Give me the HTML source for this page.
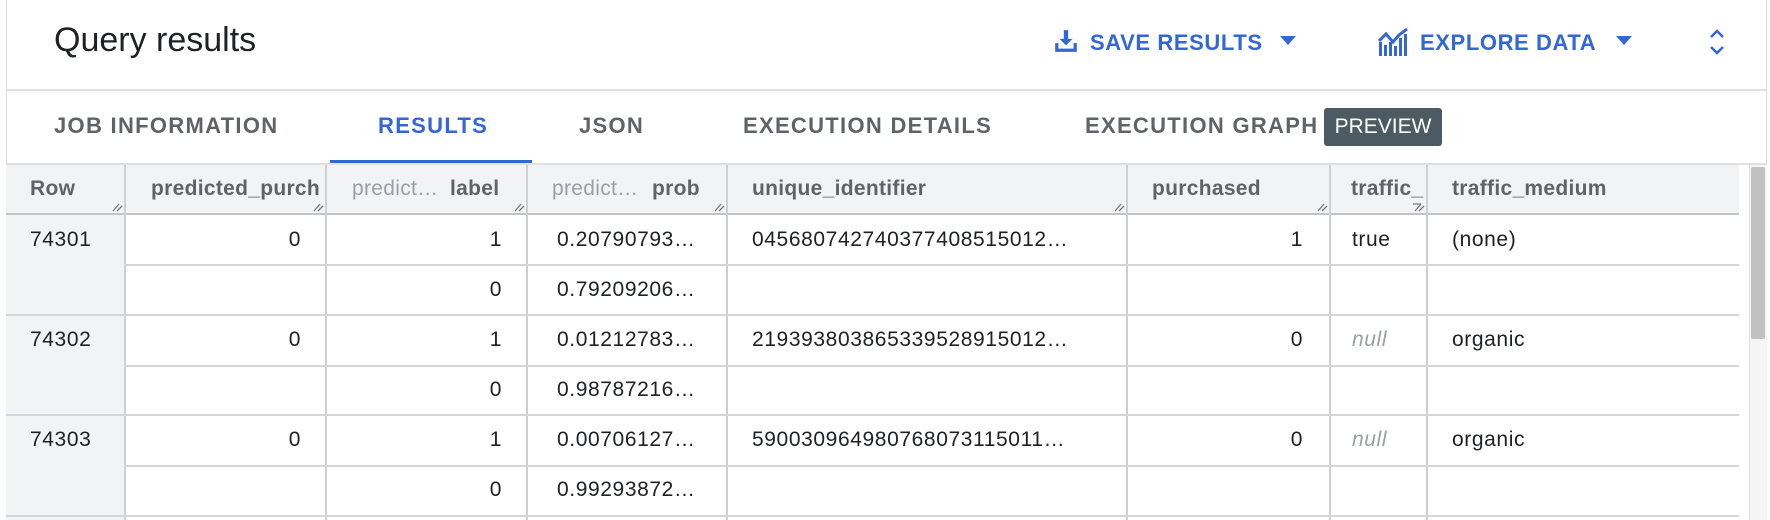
<!DOCTYPE html>
<html><head><meta charset="utf-8"><style>
*{margin:0;padding:0;box-sizing:border-box}
body{width:1770px;height:520px;overflow:hidden;background:#fff;font-family:"Liberation Sans",sans-serif;position:relative;color:#202124}
.a{position:absolute;white-space:nowrap}
.lb{left:6px;top:0;width:1px;height:520px;background:#dadce0}
.rb{left:1766px;top:0;width:1px;height:520px;background:#dadce0}
.title{left:54px;top:21px;font-size:34px;color:#202124}
.btn{color:#3367d6;font-size:22px;font-weight:bold;top:30px;letter-spacing:0.6px}
.tab{top:113px;font-size:22px;font-weight:bold;color:#5f6368;letter-spacing:1.3px}
.hdr{top:165px;height:50px;left:6px;width:1733px;background:#f1f3f4;border-bottom:2px solid #c4c4c4}
.vl{width:2px;background:#cfcfcf}
.hl{height:2px;background:#d6d6d6;left:6px;width:1733px}
.ht{top:177px;font-size:21px;font-weight:bold;color:#5f6368;letter-spacing:0.3px}
.ht2{top:177px;font-size:21px;color:#9aa0a6;letter-spacing:0.3px}
.c{font-size:21px;color:#202124;letter-spacing:0.6px}
.r{text-align:right}
</style></head><body>
<div class="a lb"></div><div class="a rb"></div>
<div class="a title">Query results</div>
<svg class="a" style="left:1053px;top:28px" width="26" height="26" viewBox="0 0 24 24"><path fill="#3367d6" d="M10 2h4v8h4l-6 6-6-6h4z M2 14h3v5h14v-5h3v8H2z"/></svg>
<div class="a btn" style="left:1090px">SAVE RESULTS</div>
<svg class="a" style="left:1280px;top:36px" width="16" height="10"><path fill="#3367d6" d="M0 0h16L8 9z"/></svg>
<svg class="a" style="left:1378px;top:28px" width="30" height="28" viewBox="0 0 30 28"><path fill="#3367d6" d="M1 14h3v14H1zM6 17h3v11H6zM11 14h3v14h-3zM16 18h3v10h-3zM21 10h3v18h-3zM26 6h3v22h-3z"/><path stroke="#3367d6" stroke-width="3" fill="none" d="M1 13l7-7 7 8 6-7 8-6"/></svg>
<div class="a btn" style="left:1420px">EXPLORE DATA</div>
<svg class="a" style="left:1616px;top:36px" width="16" height="10"><path fill="#3367d6" d="M0 0h16L8 9z"/></svg>
<svg class="a" style="left:1708px;top:26px" width="18" height="32"><path stroke="#3367d6" stroke-width="2.5" fill="none" d="M3 11l6-6 6 6M3 21l6 6 6-6"/></svg>
<div class="a" style="left:6px;top:89px;width:1761px;height:2px;background:#e0e0e0"></div>
<div class="a tab" style="left:54px">JOB INFORMATION</div>
<div class="a tab" style="left:378px;color:#3367d6">RESULTS</div>
<div class="a tab" style="left:579px">JSON</div>
<div class="a tab" style="left:743px">EXECUTION DETAILS</div>
<div class="a tab" style="left:1085px">EXECUTION GRAPH</div>
<div class="a" style="left:1324px;top:108px;width:118px;height:38px;background:#4b5a63;border-radius:3px;color:#fff;font-size:21px;text-align:center;line-height:38px">PREVIEW</div>
<div class="a" style="left:330px;top:160px;width:202px;height:4px;background:#3367d6"></div>
<div class="a" style="left:6px;top:163px;width:1761px;height:2px;background:#e0e0e0"></div>
<div class="a hdr"></div>
<div class="a" style="left:6px;top:215px;width:118px;height:305px;background:#f1f3f4"></div>
<div class="a vl" style="left:124px;top:165px;height:355px"></div>
<div class="a vl" style="left:325px;top:165px;height:355px"></div>
<div class="a vl" style="left:526px;top:165px;height:355px"></div>
<div class="a vl" style="left:726px;top:165px;height:355px"></div>
<div class="a vl" style="left:1126px;top:165px;height:355px"></div>
<div class="a vl" style="left:1329px;top:165px;height:355px"></div>
<div class="a vl" style="left:1426px;top:165px;height:355px"></div>
<div class="a hl" style="top:264px;left:124px;width:1615px"></div>
<div class="a hl" style="top:314px"></div>
<div class="a hl" style="top:365px;left:124px;width:1615px"></div>
<div class="a hl" style="top:414px"></div>
<div class="a hl" style="top:465px;left:124px;width:1615px"></div>
<div class="a hl" style="top:515px"></div>
<div class="a" style="left:1749px;top:165px;width:18px;height:355px;background:#f5f5f5;border-left:1px solid #e0e0e0"></div>
<div class="a" style="left:1751px;top:167px;width:14px;height:172px;background:#c1c1c1;border-radius:2px"></div>
<div class="a ht" style="left:30px">Row</div>
<div class="a ht" style="left:151px;width:173px;overflow:hidden">predicted_purch</div>
<div class="a ht2" style="left:352px">predict…</div><div class="a ht" style="left:450px">label</div>
<div class="a ht2" style="left:552px">predict…</div><div class="a ht" style="left:652px">prob</div>
<div class="a ht" style="left:752px">unique_identifier</div>
<div class="a ht" style="left:1152px">purchased</div>
<div class="a ht" style="left:1351px;width:75px;overflow:hidden">traffic_</div>
<div class="a ht" style="left:1452px">traffic_medium</div>
<svg class="a" style="left:0;top:195px" width="1440" height="20"><g stroke="#777" stroke-width="1.3">
<path d="M113 16l6-7M117 16l5-5M314 16l6-7M318 16l5-5M515 16l6-7M519 16l5-5M715 16l6-7M719 16l5-5M1115 16l6-7M1119 16l5-5M1318 16l6-7M1322 16l5-5M1415 16l6-7M1419 16l5-5M1413 9h8"/></g></svg>
<div class="a c" style="left:30px;top:228px">74301</div>
<div class="a c" style="left:30px;top:328px">74302</div>
<div class="a c" style="left:30px;top:428px">74303</div>
<div class="a c r" style="left:124px;width:177px;top:228px">0</div>
<div class="a c r" style="left:124px;width:177px;top:328px">0</div>
<div class="a c r" style="left:124px;width:177px;top:428px">0</div>
<div class="a c r" style="left:325px;width:177px;top:228px">1</div>
<div class="a c r" style="left:325px;width:177px;top:278px">0</div>
<div class="a c r" style="left:325px;width:177px;top:328px">1</div>
<div class="a c r" style="left:325px;width:177px;top:378px">0</div>
<div class="a c r" style="left:325px;width:177px;top:428px">1</div>
<div class="a c r" style="left:325px;width:177px;top:478px">0</div>
<div class="a c" style="left:557px;top:228px">0.20790793…</div>
<div class="a c" style="left:557px;top:278px">0.79209206…</div>
<div class="a c" style="left:557px;top:328px">0.01212783…</div>
<div class="a c" style="left:557px;top:378px">0.98787216…</div>
<div class="a c" style="left:557px;top:428px">0.00706127…</div>
<div class="a c" style="left:557px;top:478px">0.99293872…</div>
<div class="a c" style="left:752px;top:228px">045680742740377408515012…</div>
<div class="a c" style="left:752px;top:328px">219393803865339528915012…</div>
<div class="a c" style="left:752px;top:428px">590030964980768073115011…</div>
<div class="a c r" style="left:1126px;width:177px;top:228px">1</div>
<div class="a c r" style="left:1126px;width:177px;top:328px">0</div>
<div class="a c r" style="left:1126px;width:177px;top:428px">0</div>
<div class="a c" style="left:1352px;top:228px">true</div>
<div class="a c" style="left:1352px;top:328px;color:#9aa0a6;font-style:italic">null</div>
<div class="a c" style="left:1352px;top:428px;color:#9aa0a6;font-style:italic">null</div>
<div class="a c" style="left:1452px;top:228px">(none)</div>
<div class="a c" style="left:1452px;top:328px">organic</div>
<div class="a c" style="left:1452px;top:428px">organic</div>
</body></html>
